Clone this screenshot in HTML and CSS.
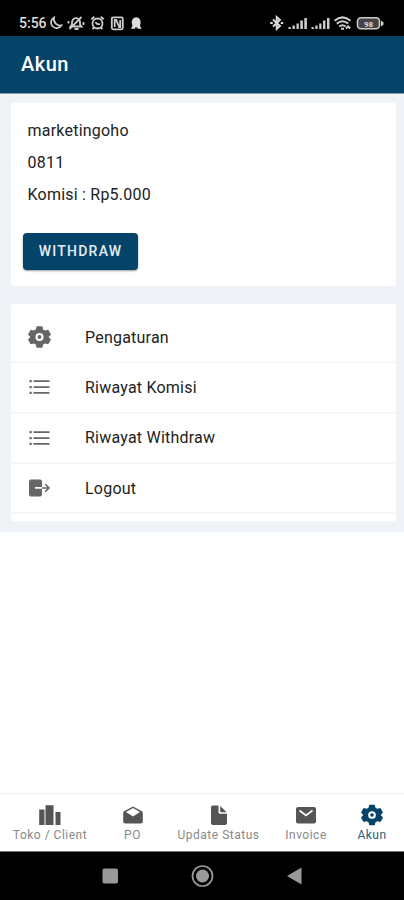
FILE: index.html
```html
<!DOCTYPE html>
<html lang="id">
<head>
<meta charset="utf-8">
<title>Akun</title>
<link rel="stylesheet" href="styles.css">
</head>
<body>
<svg class="defs" width="0" height="0">
  <symbol id="gear" viewBox="0 0 24 24">
    <path fill-rule="evenodd" d="M9 .8h6l.8 3.300 2 1.200 3.400-.9L24 9.400l-2.500 2.600 2.500 2.600-2.800 5-3.400-.9-2 1.200-.8 3.300H9l-.8-3.300-2-1.200-3.400.9L0 14.600 2.500 12 0 9.400l2.800-5 3.400.9 2-1.200ZM12 7.800a4.200 4.200 0 1 0 0 8.400 4.200 4.200 0 0 0 0-8.400Z"/>
    <circle cx="12" cy="12" r="2"/>
  </symbol>
  <symbol id="list" viewBox="0 0 22 16">
    <path d="M1 1h2.200v2.200H1zM1 7h2.200v2.200H1zM1 12.800h2.200V15H1zM5 1.200h16v1.800H5zM5 7.200h16V9H5zM5 13h16v1.800H5z"/>
  </symbol>
</svg>
<div class="screen">
  <div class="status">
    <span class="time">5:56</span>
    <svg class="status-left" width="97" height="16" viewBox="0 0 97 16">
      <path d="M5 2.500A5.600 5.600 0 1 0 12.300 10.500 6.500 6.500 0 0 1 5 2.500Z" fill="none" stroke="#ccc" stroke-width="1.800"/>
      <g fill="none" stroke="#ccc" stroke-width="1.800">
        <path d="M21.500 11.500h11l-1.500-2V6.500a4 4 0 0 0-7-2L23 7v2.500ZM25.500 14h4M20.500 14.200 32.500 2M19.500 8.500V6M34.500 10V7"/>
        <circle cx="48.500" cy="8.500" r="5"/><path d="M42.300 4.300l3-2.500M54.700 4.300l-3-2.500M46.300 7.200l2 2h2.700M45 12.500 43.500 14M52 12.500l1.500 1.500"/>
        <rect x="62.800" y="2.300" width="11" height="12" rx="1.500"/><path d="M65.700 12V5h1.500l3 7h1V5"/>
      </g>
      <path d="M82 13.700h4v-1.200h2.500v1.200h4l-1.500-3.200c2-5-1-8.300-3.700-8.300S81.300 5.500 83.500 10.500Z" fill="#ddd"/>
    </svg>
    <svg class="status-right" width="116" height="16" viewBox="0 0 116 16">
      <path d="m3 4.500 7 6.500-3.300 3V2L10 5l-7 6.500M.2 8h2.600M10.800 8h2.400" fill="none" stroke="#ddd" stroke-width="1.900"/>
      <g fill="#ccc">
        <path d="M18.500 12h2.300v2h-2.300zM22.500 10.500h2.300V14h-2.300zM26.500 8.500h2.300V14h-2.300zM30.300 5.500h2.600V14h-2.600zM34.300 3h2.600v11h-2.600z"/>
        <path d="M41.500 12h2.300v2h-2.300zM45.300 10.500h2.300V14h-2.300zM49.200 8.500h2.300V14h-2.300zM53 5.500h2.400V14H53zM57 3h2.500v11H57z"/>
      </g>
      <path d="M64.500 5.700c5-4.200 11-4.200 16 0M66.800 8.600c3.700-3 7.700-3 11.400 0M69.300 11.500c2-1.600 4.400-1.600 6.400 0M71 13.700h3M76 13.500l2.200-2 2 2" fill="none" stroke="#ccc" stroke-width="2"/>
      <rect x="87.500" y="2.800" width="22" height="11" rx="3.500" fill="#444" stroke="#ccc" stroke-width="1.600"/>
      <path d="M111 5.500v6l2.500-1.700V7.200Z" fill="#ccc"/>
      <text class="battery" x="98.500" y="11.500" text-anchor="middle">98</text>
    </svg>
  </div>
  <header class="appbar">Akun</header>
  <main class="content">
    <section class="card profile">
      <p class="line name">marketingoho</p>
      <p class="line">0811</p>
      <p class="line">Komisi : Rp5.000</p>
      <button class="withdraw" type="button">WITHDRAW</button>
    </section>
    <section class="card menu">
      <div class="item"><svg width="23" height="24"><use href="#gear"/></svg><span>Pengaturan</span></div>
      <div class="item"><svg width="23" height="16"><use href="#list"/></svg><span>Riwayat Komisi</span></div>
      <div class="item"><svg width="23" height="16"><use href="#list"/></svg><span>Riwayat Withdraw</span></div>
      <div class="item"><svg width="23" height="18" viewBox="0 0 23 18"><path d="M3 .5h9a2 2 0 0 1 2 2V8H7v1.800h7v5.700a2 2 0 0 1-2 2H3a2 2 0 0 1-2-2v-13a2 2 0 0 1 2-2Z"/><path d="M14 8.900h7M17.200 5l3.800 3.900-3.800 3.900" fill="none" stroke="#666" stroke-width="1.500"/></svg><span>Logout</span></div>
    </section>
  </main>
  <nav class="tabs">
    <div class="tab"><svg width="22" height="22" viewBox="0 0 22 22"><path d="M.2 5.500h5.300V21H.2zM6.500 1.200h8V21h-8zM16.500 8h5v13h-5z"/></svg><span>Toko / Client</span></div>
    <div class="tab"><svg width="22" height="22" viewBox="0 0 22 22"><path fill-rule="evenodd" d="M11 2.500 19.500 7c1 .5 1.300 1 1.300 2v8.500c0 1.200-.8 2-2 2H3.200c-1.200 0-2-.8-2-2V9c0-1 .3-1.500 1.300-2ZM11 4 4 8l7 4.500L18 8Z"/></svg><span>PO</span></div>
    <div class="tab"><svg width="22" height="22" viewBox="0 0 22 22"><path d="M5 1.500h5.500V8c0 1 .8 1.800 1.800 1.800H19V19c0 1.200-.8 2-2 2H5c-1.200 0-2-.8-2-2V3.500c0-1.200.8-2 2-2ZM12.200 2l6.500 6.300h-5c-1 0-1.500-.5-1.500-1.500Z"/></svg><span>Update Status</span></div>
    <div class="tab"><svg width="22" height="22" viewBox="0 0 22 22"><rect x="1" y="3" width="20" height="16.500" rx="2"/><path d="m4.500 6.500 6.500 5 6.500-5" fill="none" stroke="#fff" stroke-width="1.700"/></svg><span>Invoice</span></div>
    <div class="tab active"><svg width="22" height="22"><use href="#gear"/></svg><span>Akun</span></div>
  </nav>
  <div class="system">
    <svg width="202" height="24" viewBox="0 0 202 24"><rect x="1.500" y="4.500" width="15.500" height="15" rx="2" fill="#999"/><circle cx="101.500" cy="12" r="10" fill="none" stroke="#999" stroke-width="1.700"/><circle cx="101.500" cy="12" r="6.500" fill="#999"/><path d="m186 12 14.500-8.500v17Z" fill="#999"/></svg>
  </div>
</div>
</body>
</html>
```
FILE: styles.css
```css
* { box-sizing: border-box; }
body { margin: 0; font-family: Roboto, "Liberation Sans", sans-serif; color: #222; background: #fff; }
.defs { position: absolute; }
.screen { width: 404px; height: 900px; display: flex; flex-direction: column; }
.status { height: 36px; flex: none; background: #000; display: flex; align-items: flex-start; padding: 15px 18px 0 19px; }
.time { width: 30px; font-size: 14px; line-height: 17px; color: #ddd; font-weight: 500; white-space: nowrap; }
.status-right { margin-left: auto; }
.battery { font-size: 8px; font-weight: 700; fill: #ddd; }
.appbar { height: 58px; flex: none; background: #054468; border-bottom: 1px solid #7b9db2; color: #fff; font-size: 20px; font-weight: 500; line-height: 56px; letter-spacing: .5px; padding-left: 21px; }
.content { height: 438px; flex: none; background: #eff3f7; padding: 9px 8px 11px 11px; }
.card { width: 385px; background: #fff; border-radius: 2px; letter-spacing: .22px; }
.profile { height: 183px; padding: 11px 12px 0; }
.line { margin: 0 0 0 4.500px; height: 32px; font-size: 16px; line-height: 33px; }
.withdraw { display: block; width: 115px; height: 37px; margin-top: 23px; padding: 0; border: 0; border-radius: 4px; background: #054468; box-shadow: 0 1px 2px #0006; color: #e5eef5; font: 500 14px/37px Roboto, sans-serif; letter-spacing: 1.25px; }
.menu { height: 217px; margin-top: 18px; padding-top: 9px; }
.item { height: 50.300px; border-bottom: 2px solid #f6f7f8; padding: 0 17px; display: flex; align-items: center; font-size: 16px; }
.item svg { fill: #666; margin-right: 34px; flex: none; }
.tabs { height: 59px; margin-top: auto; flex: none; border-top: 1px solid #eee; border-bottom: 1px solid #777; display: grid; grid-template-columns: 100px 65px 107px 68px 64px; color: #888; }
.tab { display: flex; flex-direction: column; align-items: center; padding-top: 10px; font-size: 12px; line-height: 17px; white-space: nowrap; letter-spacing: .5px; }
.tab svg { fill: #555; margin-bottom: 1px; }
.tab.active { color: #246080; }
.tab.active svg { fill: #054468; }
.system { height: 48px; flex: none; background: #000; display: flex; justify-content: center; padding-top: 12px; }
```
